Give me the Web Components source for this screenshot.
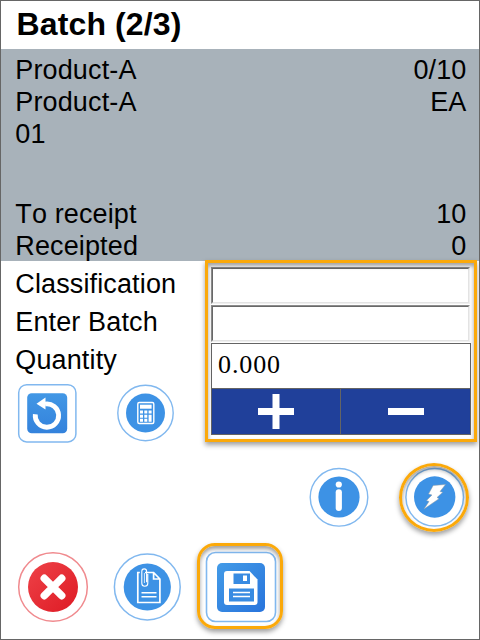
<!DOCTYPE html>
<html lang="en"><head><meta charset="utf-8"><title>Batch</title>
<style>html,body{margin:0;background:#fff}</style></head><body>
<batch-screen></batch-screen>
<script>
const define = (name, html) => customElements.define(name, class extends HTMLElement {
  constructor() {
    super();
    const t = document.createElement('template');
    t.innerHTML = html;
    this.attachShadow({mode: 'open'}).append(t.content.cloneNode(true));
  }
});

define('info-row', `<style>
:host{display:flex;justify-content:space-between;height:32px;line-height:32px;white-space:nowrap}
</style><slot></slot><slot name="value"></slot>`);

define('field-label', `<style>:host{display:block;height:38px;line-height:38px;white-space:nowrap}</style><slot></slot>`);

define('text-field', `<style>
:host{display:block;box-sizing:border-box;height:37px;margin-bottom:1px;background:#fff;border:1px solid;border-color:#8c8c8c #f0f0f0 #f0f0f0 #8c8c8c}
div{box-sizing:border-box;height:100%;border:1px solid;border-color:#696969 #e3e3e3 #e3e3e3 #696969}
</style><div><slot></slot></div>`);

define('quantity-stepper', `<style>
:host{display:block;box-sizing:border-box;width:260px;height:92px;border:1px solid #646464;background:#fff}
.v{height:44px;padding-left:6px;border-bottom:1px solid #646464;font:26px/41px "Liberation Serif",serif;letter-spacing:.9px}
.b{display:grid;grid-template-columns:128px 1fr;gap:1px;height:45px;background:#646464}
.b span{display:grid;place-items:center;background:#20409a}
svg{display:block}
</style><div class="v"><slot></slot></div>
<div class="b"><span><svg width="36" height="36"><path d="M0 14h14.500V0h7v14H36v7H21.500v14h-7V21H0z" fill="#fff"/></svg></span>
<span><svg width="36" height="36"><path d="M0 14h36v7H0z" fill="#fff"/></svg></span></div>`);

define('highlight-frame', `<style>
:host{position:absolute;box-sizing:border-box;pointer-events:none;border:3px solid #fba90a;box-shadow:0 3px 5px rgba(0,0,0,.38),inset 0 3px 4px rgba(0,0,0,.38)}
</style>`);

define('icon-button', `<style>
:host{display:block;position:relative;flex:none}
::slotted(svg){display:block;overflow:visible}
</style><slot></slot>`);

define('batch-screen', `<style>
:host{display:block;box-sizing:border-box;width:480px;height:640px;border:1px solid #666;background:#fff;color:#000;font:27px "Liberation Sans",Arial,sans-serif;font-kerning:none;letter-spacing:.13px;overflow:hidden}
h1{margin:0;height:48px;font-size:32px;font-weight:bold;line-height:46px;padding-left:15.500px}
.summary{box-sizing:border-box;height:212px;padding:5px 12.500px 0 14.300px;background:#a8b2ba}
.gap{height:48px}
.form{display:grid;grid-template-columns:210px 260px;height:192px}
.labels{padding:4px 0 0 14.300px}
.tools{display:flex;align-items:flex-start;gap:40px;padding:5px 0 0 2.700px}
.fields{position:relative;padding-top:6px}
.fields text-field{width:259px}
.fields highlight-frame{left:-6px;top:-1px;width:272px;height:182px}
.actions{display:flex;justify-content:flex-end;gap:35px;height:60px;padding:14px 15px 0 0}
.footer{display:flex;align-items:center;height:72px;padding:24px 0 0 16px}
</style>
<h1>Batch (2/3)</h1>
<div class="summary">
<info-row><span>Product-A</span><span slot="value">0/10</span></info-row>
<info-row><span>Product-A</span><span slot="value">EA</span></info-row>
<info-row><span>01</span></info-row>
<div class="gap"></div>
<info-row><span>To receipt</span><span slot="value">10</span></info-row>
<info-row><span>Receipted</span><span slot="value">0</span></info-row>
</div>
<div class="form">
<div class="labels">
<field-label>Classification</field-label><field-label>Enter Batch</field-label><field-label>Quantity</field-label>
<div class="tools">
<icon-button><svg width="59" height="59">
<defs><linearGradient id="a" x2="0" y2="1"><stop stop-color="#4297e5"/><stop offset="1" stop-color="#3382dc"/></linearGradient></defs>
<rect x=".7" y=".7" width="57.200" height="57.200" rx="8" fill="#fff" stroke="#81b8ef" stroke-width="1.500"/>
<rect x="9.200" y="9.300" width="40" height="40" rx="4.500" fill="url(#a)"/>
<path d="M17.300 30.200A11.700 11.700 0 1 0 27 20" fill="none" stroke="#fff" stroke-width="4.800"/>
<path d="M18.500 19.700l9-6.100v12z" fill="#fff"/></svg></icon-button>
<icon-button><svg width="57" height="57" style="margin-top:1px">
<circle cx="28.500" cy="28" r="27.700" fill="#fff" stroke="#81b8ef" stroke-width="1.400"/>
<circle cx="28.500" cy="28" r="19.500" fill="#3d92e5"/>
<rect x="20.800" y="17.500" width="16" height="21" rx="1.500" fill="#3d92e5" stroke="#fff" stroke-width="1.400"/>
<rect x="23" y="19.700" width="11.600" height="4" fill="#fff"/>
<g fill="#fff" transform="translate(0 -.5)"><path d="M23 26h3v3h-3zM27.300 26h3v3h-3zM31.600 26h3v3h-3zM23 30.200h3v3h-3zM27.300 30.200h3v3h-3zM31.600 30.200h3v7h-3zM23 34.300h3v2.900h-3zM27.300 34.300h3v2.900h-3z"/></g></svg></icon-button>
</div></div>
<div class="fields"><text-field></text-field><text-field></text-field><quantity-stepper>0.000</quantity-stepper><highlight-frame></highlight-frame></div>
</div>
<div class="actions">
<icon-button><svg width="60" height="60">
<circle cx="30" cy="30.300" r="28.800" fill="#fff" stroke="#81b8ef" stroke-width="1.400"/>
<circle cx="30" cy="30" r="20.600" fill="#3d92e5"/>
<circle cx="29.800" cy="17.500" r="3.100" fill="#fff"/><rect x="26.700" y="22.200" width="6.200" height="21.800" rx="3.100" fill="#fff"/></svg></icon-button>
<icon-button><svg width="60" height="60">
<circle cx="30.700" cy="30.300" r="28.800" fill="#fff" stroke="#81b8ef" stroke-width="1.500"/>
<circle cx="30.700" cy="30" r="20.700" fill="#3d92e5"/>
<path d="M29.200 18.500L41.500 17.500L36 24.500L38.700 25.300L33 30.500L35 31.700L20 42L25 34.500L22.500 33.500L28 28L24.500 27Z" fill="#fff" stroke="#8f9ba3" stroke-width=".5"/></svg>
<highlight-frame style="left:-5px;top:-4px;width:70px;height:69px;border-radius:50%"></highlight-frame></icon-button>
</div>
<div class="footer">
<icon-button><svg width="72" height="72">
<defs><linearGradient id="r" x2="1" y2="1"><stop stop-color="#ee4248"/><stop offset="1" stop-color="#de1a24"/></linearGradient></defs>
<circle cx="36" cy="36" r="34.300" fill="#fff" stroke="#f08a8e" stroke-width="1.500"/>
<circle cx="36" cy="36" r="25" fill="url(#r)"/>
<path d="M27.300 27.300L44.700 44.700M44.700 27.300L27.300 44.700" stroke="#fff" stroke-width="7.500" stroke-linecap="round"/></svg></icon-button>
<icon-button style="margin-left:22px"><svg width="72" height="72">
<circle cx="36.300" cy="36" r="32.900" fill="#fff" stroke="#81b8ef" stroke-width="1.500"/>
<circle cx="36.300" cy="36" r="23.600" fill="#3d92e5"/>
<path d="M34 21.500h8.600l6.300 6.500v23.500H26.800v-30h2M42.600 21.500V28h6.300" fill="none" stroke="#fff" stroke-width="1.700"/>
<path d="M30.500 41.800h15M30.500 45.700h15" stroke="#fff" stroke-width="1.400"/>
<path d="M36.800 23v9.300a3 3 0 0 1-6 0V20.300a2.400 2.400 0 0 1 4.800 0v11" fill="none" stroke="#fff" stroke-width="1.100"/><path d="M33.400 22v10" stroke="#fff" stroke-width=".8"/></svg></icon-button>
<icon-button style="margin-left:22px"><svg width="72" height="72">
<defs><linearGradient id="s" x2="1" y2="1"><stop stop-color="#439be7"/><stop offset="1" stop-color="#2874dc"/></linearGradient></defs>
<rect x="1.500" y="1.500" width="69" height="69" rx="9" fill="#fff" stroke="#81b8ef" stroke-width="1.600"/>
<rect x="12" y="12" width="48" height="49" rx="5" fill="url(#s)"/>
<path d="M22 20h22.500l8 8.500V51a3 3 0 0 1-3 3H22a3 3 0 0 1-3-3V23a3 3 0 0 1 3-3z" fill="#fff"/>
<path d="M28.500 22.500H45v10.500H28.500zM24 37.500h25v13H24z" fill="#388be2"/>
<path d="M38 24.500h4V30h-4z" fill="#fff"/><path d="M28 41.500h17M28 45.500h17" stroke="#fff" stroke-width="1.300"/></svg>
<highlight-frame style="left:-8px;top:-8px;width:86px;height:86px;border-radius:18px"></highlight-frame></icon-button>
</div>`);
</script></body></html>
